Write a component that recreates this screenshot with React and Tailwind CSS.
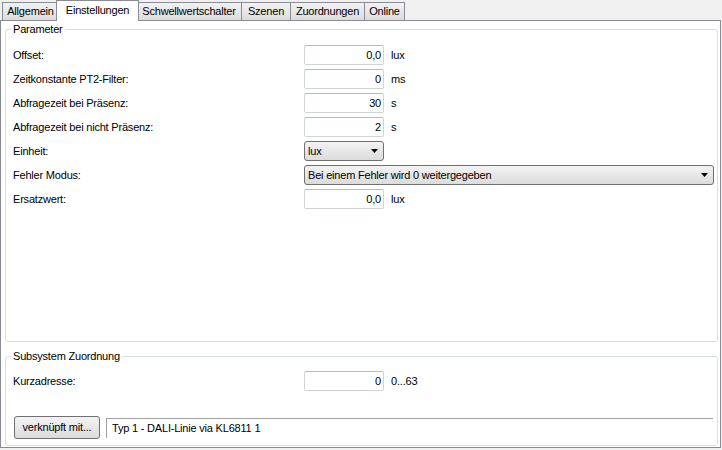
import React from "react";

const tabs = [
  { label: "Allgemein", w: "w-[57px]" },
  { label: "Einstellungen", w: "w-[83px]", active: true },
  { label: "Schwellwertschalter", w: "w-[106px]" },
  { label: "Szenen", w: "w-[50px]" },
  { label: "Zuordnungen", w: "w-[75px]" },
  { label: "Online", w: "w-[41px]" },
];

function Field({ value, unit }) {
  return (
    <div className="flex items-center">
      <div className="w-[80px] h-[20px] border border-[#cfd4da] border-t-[#b5bac1] rounded-[2px] bg-white flex items-center justify-end pr-[2px]">
        {value}
      </div>
      {unit && <span className="ml-[7px]">{unit}</span>}
    </div>
  );
}

function Arrow() {
  return (
    <svg width="7" height="4" viewBox="0 0 7 4">
      <path d="M0 0h7L3.5 4z" fill="#000" />
    </svg>
  );
}

function Combo({ value, wide }) {
  return (
    <div
      className={
        "h-[20px] border border-[#707070] rounded-[3px] bg-gradient-to-b from-[#f3f3f3] to-[#dcdcdc] flex items-center justify-between pl-[3px] pr-[5px] " +
        (wide ? "w-[410px]" : "w-[80px]")
      }
    >
      <span>{value}</span>
      <Arrow />
    </div>
  );
}

function Row({ label, children }) {
  return (
    <div className="flex items-center h-[20px]">
      <div className="w-[291px]">{label}</div>
      {children}
    </div>
  );
}

function Group({ title, className, children }) {
  return (
    <div className={"relative border border-[#d5dfe5] rounded-[3px] ml-[4px] mr-[2px] " + className}>
      <span className="absolute left-[5px] -top-[8px] bg-white px-[2px] leading-[14px]">{title}</span>
      {children}
    </div>
  );
}

export default function App() {
  return (
    <div
      className="w-[722px] h-[450px] bg-[#f0f0f0] text-[11px] tracking-[-0.2px] text-black leading-none"
      style={{ fontFamily: '"Liberation Sans", Arial, sans-serif' }}
    >
      {/* Tabs */}
      <div className="h-[20px] flex items-end pl-[2px] relative z-10">
        {tabs.map((t, i) =>
          t.active ? (
            <div
              key={i}
              className={t.w + " h-[21px] -mb-px -mx-[2px] -ml-[3px] relative z-10 bg-white border border-b-0 border-[#898c95] flex items-center justify-center pb-[2px]"}
            >
              {t.label}
            </div>
          ) : (
            <div
              key={i}
              className={t.w + " h-[18px] " + (i === 0 ? "" : "-ml-px ") + "border border-b-0 border-[#898c95] bg-gradient-to-b from-[#f2f2f2] to-[#dcdcdc] flex items-center justify-center"}
            >
              {t.label}
            </div>
          )
        )}
      </div>

      {/* Panel */}
      <div className="w-[721px] h-[428px] border border-[#898c95] bg-white flex flex-col">
        <Group title="Parameter" className="mt-[8px] h-[313px] pt-[15px] pl-[7px]">
          <div className="flex flex-col gap-[4px]">
            <Row label="Offset:"><Field value="0,0" unit="lux" /></Row>
            <Row label="Zeitkonstante PT2-Filter:"><Field value="0" unit="ms" /></Row>
            <Row label="Abfragezeit bei Präsenz:"><Field value="30" unit="s" /></Row>
            <Row label="Abfragezeit bei nicht Präsenz:"><Field value="2" unit="s" /></Row>
            <Row label="Einheit:"><Combo value="lux" /></Row>
            <Row label="Fehler Modus:"><Combo value="Bei einem Fehler wird 0 weitergegeben" wide /></Row>
            <Row label="Ersatzwert:"><Field value="0,0" unit="lux" /></Row>
          </div>
        </Group>

        <Group title="Subsystem Zuordnung" className="mt-[14px] h-[90px] pt-[14px] pl-[7px]">
          <Row label="Kurzadresse:"><Field value="0" unit="0...63" /></Row>
          <div className="flex items-center mt-[25px] ml-[1px]">
            <div className="w-[86px] h-[23px] border border-[#707070] rounded-[3px] bg-gradient-to-b from-[#f3f3f3] to-[#dcdcdc] flex items-center justify-center">
              verknüpft mit...
            </div>
            <div className="ml-[6px] w-[607px] h-[20px] border-t border-l border-[#a0a0a0] flex items-center pl-[5px]">
              Typ 1 - DALI-Linie via KL6811 1
            </div>
          </div>
        </Group>
      </div>
    </div>
  );
}
